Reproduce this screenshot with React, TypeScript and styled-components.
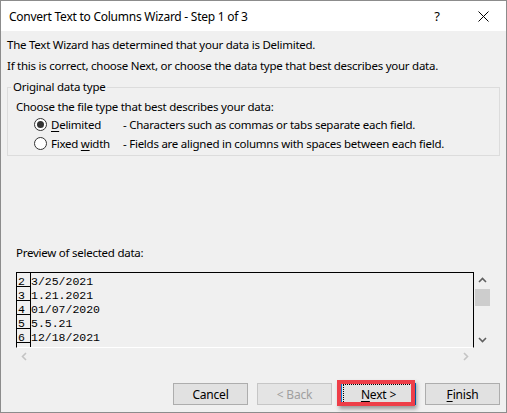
import React from 'react';
import styled, {createGlobalStyle} from 'styled-components';

const GlobalStyle = createGlobalStyle`
  html, body {
    margin: 0;
    padding: 0;
    background: #fff;
  }
  body {
    font-family: "Noto Sans", "Liberation Sans", sans-serif;
    font-size: 11.5px;
    letter-spacing: -0.25px;
    color: #000;
  }
  * {
    box-sizing: border-box;
  }
`;

const rows = [
  {n: '2', text: '3/25/2021'},
  {n: '3', text: '1.21.2021'},
  {n: '4', text: '01/07/2020'},
  {n: '5', text: '5.5.21'},
  {n: '6', text: '12/18/2021'},
  {n: '', text: ''},
];

function Chevron({dir, color}: {dir: 'up' | 'down' | 'left' | 'right'; color: string}) {
  const rot = {up: 0, right: 90, down: 180, left: 270}[dir];
  return (
    <svg width="9" height="9" viewBox="0 0 9 9">
      <path
        d="M1 6 L4.5 2.5 L8 6"
        fill="none"
        stroke={color}
        strokeWidth="1.6"
        transform={`rotate(${rot} 4.5 4.5)`}
      />
    </svg>
  );
}

function App() {
  return (
    <>
      <GlobalStyle />
      <Window>
        <TitleBar>
          <Title>Convert Text to Columns Wizard - Step 1 of 3</Title>
          <CaptionButton>?</CaptionButton>
          <CaptionButton>
            <svg width="11" height="11" viewBox="0 0 11 11">
              <path d="M0.5 0.5 L10.5 10.5 M10.5 0.5 L0.5 10.5" stroke="#000" strokeWidth="1" />
            </svg>
          </CaptionButton>
        </TitleBar>

        <Body>
          <Line>The Text Wizard has determined that your data is Delimited.</Line>
          <Line $gap>If this is correct, choose Next, or choose the data type that best describes your data.</Line>

          <GroupBox>
            <Legend>Original data type</Legend>
            <Line>Choose the file type that best describes your data:</Line>
            <RadioRow>
              <Radio $checked />
              <span>
                <Key>D</Key>elimited
              </span>
              <span>- Characters such as commas or tabs separate each field.</span>
            </RadioRow>
            <RadioRow>
              <Radio />
              <span>
                Fixed <Key>w</Key>idth
              </span>
              <span>- Fields are aligned in columns with spaces between each field.</span>
            </RadioRow>
          </GroupBox>

          <Spacer />

          <PreviewLabel>Preview of selected data:</PreviewLabel>
          <PreviewArea>
            <DataBox>
              {rows.map((r, i) => (
                <DataRow key={i}>
                  <RowNum>{r.n}</RowNum>
                  <RowText>{r.text}</RowText>
                </DataRow>
              ))}
            </DataBox>
            <VScroll>
              <ArrowCell>
                <Chevron dir="up" color="#606060" />
              </ArrowCell>
              <Thumb />
              <Spacer />
              <ArrowCell>
                <Chevron dir="down" color="#606060" />
              </ArrowCell>
            </VScroll>
            <HScroll>
              <ArrowCell>
                <Chevron dir="left" color="#c4c4c4" />
              </ArrowCell>
              <ArrowCell>
                <Chevron dir="right" color="#c4c4c4" />
              </ArrowCell>
            </HScroll>
          </PreviewArea>

          <ButtonRow>
            <Button>Cancel</Button>
            <Button disabled>&lt; Back</Button>
            <Button $default>
              <FocusRing>
                <Key>N</Key>ext &gt;
              </FocusRing>
            </Button>
            <Button>
              <Key>F</Key>inish
            </Button>
          </ButtonRow>
        </Body>
      </Window>
    </>
  );
}

const Window = styled.div`
  width: 507px;
  height: 413px;
  display: flex;
  flex-direction: column;
  border: 1px solid #8c8c8c;
  background: #f0f0f0;
`;

const TitleBar = styled.div`
  height: 30px;
  display: flex;
  align-items: center;
  padding-left: 8px;
  background: #fff;
  font-size: 12px;
`;

const Title = styled.span`
  flex: 1;
`;

const CaptionButton = styled.div`
  width: 46px;
  height: 30px;
  display: flex;
  align-items: center;
  justify-content: center;
  font-size: 13px;
`;

const Body = styled.div`
  flex: 1;
  display: flex;
  flex-direction: column;
  padding: 6px 6px 7px 6px;
`;

const Line = styled.div<{$gap?: boolean}>`
  line-height: 16px;
  white-space: nowrap;
  margin-top: ${p => (p.$gap ? '5px' : '0')};
`;

const GroupBox = styled.fieldset`
  margin: 5px 0 0 0;
  padding: 4px 8px 2px 8px;
  min-width: 0;
  border: 1px solid #dcdcdc;
`;

const Legend = styled.legend`
  margin-left: -5px;
  padding: 0 2px;
  line-height: 16px;
`;

const RadioRow = styled.div`
  height: 19px;
  margin-left: 18px;
  display: grid;
  grid-template-columns: 17px 72px 1fr;
  align-items: center;
  white-space: nowrap;
`;

const Radio = styled.span<{$checked?: boolean}>`
  width: 13px;
  height: 13px;
  border-radius: 50%;
  border: 1px solid #333;
  background: #fff;
  display: flex;
  align-items: center;
  justify-content: center;
  &::after {
    content: '';
    width: 7px;
    height: 7px;
    border-radius: 50%;
    background: ${p => (p.$checked ? '#333' : 'transparent')};
  }
`;

const Key = styled.span`
  text-decoration: underline;
  text-underline-offset: 2px;
`;

const Spacer = styled.div`
  flex: 1;
`;

const PreviewLabel = styled.div`
  margin-left: 9px;
  line-height: 16px;
`;

const PreviewArea = styled.div`
  margin: 11px 0 0 9px;
  width: 475px;
  display: grid;
  grid-template-columns: 458px 17px;
  grid-template-rows: 76px 17px;
`;

const DataBox = styled.div`
  border: 1px solid #000;
  border-bottom-color: #fff;
  overflow: hidden;
  font-family: "Liberation Mono", "Courier New", monospace;
  font-size: 11.5px;
  letter-spacing: 0;
`;

const DataRow = styled.div`
  display: flex;
  height: 14px;
`;

const RowNum = styled.div`
  width: 14px;
  height: 14px;
  border-right: 1px solid #000;
  border-bottom: 1px solid #000;
  padding: 3px 0 0 1px;
  line-height: 11px;
`;

const RowText = styled.div`
  padding-top: 3px;
  line-height: 11px;
  white-space: pre;
`;

const VScroll = styled.div`
  display: flex;
  flex-direction: column;
`;

const ArrowCell = styled.div`
  width: 17px;
  height: 17px;
  display: flex;
  align-items: center;
  justify-content: center;
`;

const Thumb = styled.div`
  width: 15px;
  height: 17px;
  margin-left: 1px;
  background: #cdcdcd;
`;

const HScroll = styled.div`
  display: flex;
  justify-content: space-between;
`;

const ButtonRow = styled.div`
  margin-top: 18px;
  display: flex;
  justify-content: flex-end;
  gap: 9px;
`;

const Button = styled.button<{$default?: boolean}>`
  position: relative;
  width: 75px;
  height: 22px;
  padding: 0;
  font-family: inherit;
  font-size: 12px;
  letter-spacing: -0.2px;
  color: #000;
  background: #e1e1e1;
  border: 1px solid ${p => (p.$default ? '#0078d7' : '#adadad')};
  display: flex;
  align-items: center;
  justify-content: center;
  &:disabled {
    color: #a0a0a0;
    background: #e4e4e4;
    border-color: #c6c6c6;
  }
  ${p =>
    p.$default &&
    `
    &::after {
      content: '';
      position: absolute;
      top: -4px;
      left: -5px;
      right: 0;
      bottom: -2px;
      border: 4px solid #ee3e48;
      box-shadow: 2px 3px 4px rgba(0, 0, 0, 0.35);
    }
  `}
`;

const FocusRing = styled.span`
  width: 100%;
  height: 100%;
  margin: 1px;
  outline: 1px dotted #000;
  outline-offset: -1px;
  display: flex;
  align-items: center;
  justify-content: center;
`;

export default App;
